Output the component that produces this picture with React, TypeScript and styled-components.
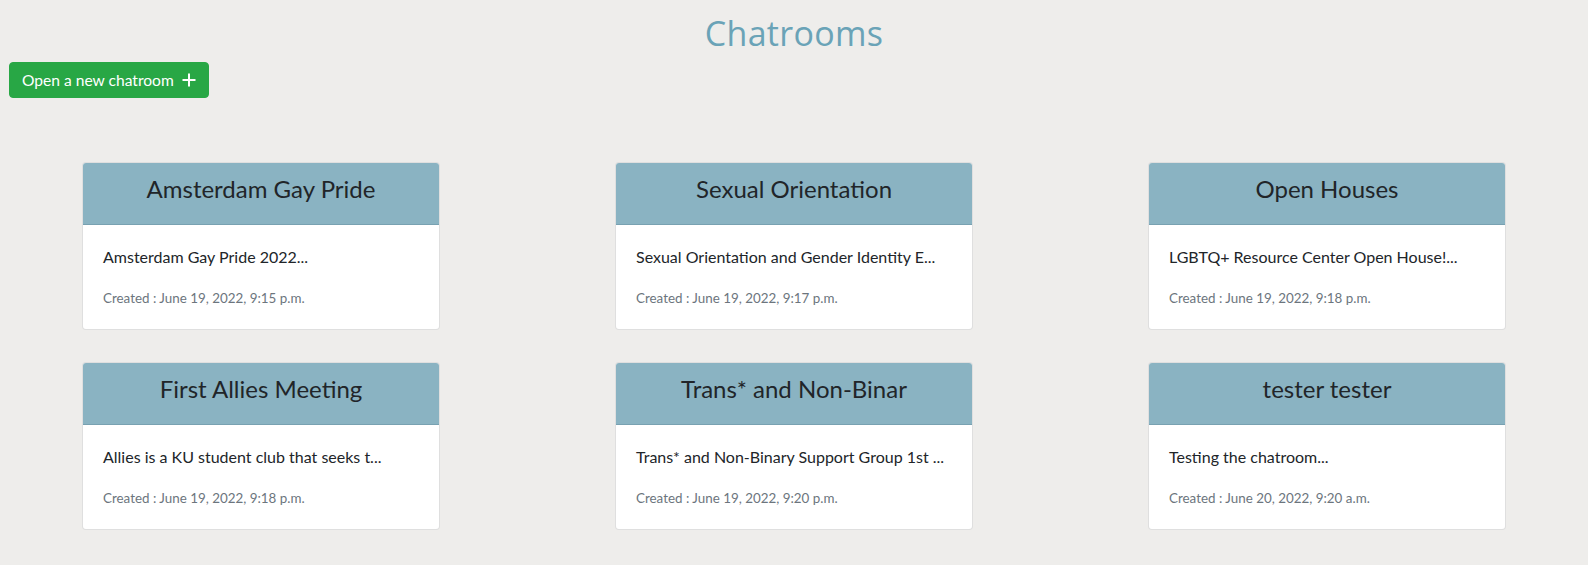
import React from "react";
import styled, { createGlobalStyle } from "styled-components";

const GlobalStyle = createGlobalStyle`
  html, body {
    margin: 0;
    padding: 0;
    background: #eeedeb;
  }
  body {
    font-family: Lato, "Open Sans", sans-serif;
    color: #212529;
  }
  * { box-sizing: border-box; }
`;

const Page = styled.div`
  min-height: 565px;
  background: #eeedeb;
  padding: 0 9px;
`;

const Title = styled.h1`
  margin: 0;
  padding-top: 13px;
  text-align: center;
  font-family: "Open Sans", sans-serif;
  font-weight: 500;
  font-size: 34px;
  line-height: 40px;
  color: #6aa3b7;
  letter-spacing: 0.3px;
`;

const Toolbar = styled.div`
  display: flex;
  margin-top: 9px;
`;

const NewButton = styled.button`
  display: inline-flex;
  align-items: center;
  gap: 8px;
  height: 36px;
  padding: 0 12px;
  border: 1px solid #28a745;
  border-radius: 4px;
  background: #28a745;
  color: #fff;
  font-family: Lato, sans-serif;
  font-size: 15.6px;
  line-height: 24px;
  cursor: pointer;
`;

const Grid = styled.div`
  display: grid;
  grid-template-columns: repeat(3, 358px);
  column-gap: 175px;
  row-gap: 32px;
  justify-content: center;
  margin: 64px -9px 0;
`;

const Card = styled.div`
  background: #fff;
  border: 1px solid rgba(0, 0, 0, 0.125);
  border-radius: 4px;
  overflow: hidden;
`;

const CardHeader = styled.div`
  background: #8ab3c2;
  border-bottom: 1px solid #78a1b1;
  padding: 12px 20px;
  text-align: center;
`;

const CardTitle = styled.h3`
  margin: 0 0 8px;
  font-family: Lato, sans-serif;
  font-weight: 400;
  font-size: 24px;
  line-height: 1.2;
  color: #212529;
`;

const CardBody = styled.div`
  padding: 21px 20px 20px;
`;

const Description = styled.p`
  margin: 0 0 20px;
  font-size: 16px;
  line-height: 22px;
  color: #212529;
  white-space: nowrap;
`;

const Created = styled.p`
  margin: 0;
  font-size: 13.4px;
  line-height: 21px;
  color: #6c757d;
`;

const PlusIcon = () => (
  <svg width="14" height="14" viewBox="0 0 14 14" aria-hidden="true">
    <path d="M7 0.5V13.5M0.5 7H13.5" stroke="#fff" strokeWidth="2" fill="none" />
  </svg>
);

const rooms = [
  { title: "Amsterdam Gay Pride", desc: "Amsterdam Gay Pride 2022...", created: "June 19, 2022, 9:15 p.m." },
  { title: "Sexual Orientation", desc: "Sexual Orientation and Gender Identity E...", created: "June 19, 2022, 9:17 p.m." },
  { title: "Open Houses", desc: "LGBTQ+ Resource Center Open House!...", created: "June 19, 2022, 9:18 p.m." },
  { title: "First Allies Meeting", desc: "Allies is a KU student club that seeks t...", created: "June 19, 2022, 9:18 p.m." },
  { title: "Trans* and Non-Binar", desc: "Trans* and Non-Binary Support Group 1st ...", created: "June 19, 2022, 9:20 p.m." },
  { title: "tester tester", desc: "Testing the chatroom...", created: "June 20, 2022, 9:20 a.m." },
];

export default function App() {
  return (
    <>
      <GlobalStyle />
      <Page>
        <Title>Chatrooms</Title>
        <Toolbar>
          <NewButton>
            Open a new chatroom
            <PlusIcon />
          </NewButton>
        </Toolbar>
        <Grid>
          {rooms.map((r) => (
            <Card key={r.title}>
              <CardHeader>
                <CardTitle>{r.title}</CardTitle>
              </CardHeader>
              <CardBody>
                <Description>{r.desc}</Description>
                <Created>Created : {r.created}</Created>
              </CardBody>
            </Card>
          ))}
        </Grid>
      </Page>
    </>
  );
}
